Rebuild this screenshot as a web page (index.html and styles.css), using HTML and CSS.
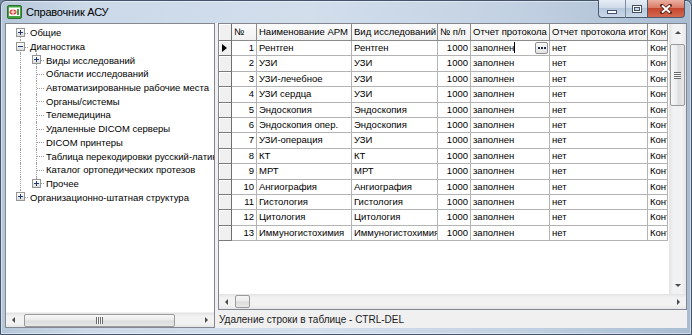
FILE: index.html
```html
<!DOCTYPE html>
<html lang="ru">
<head>
<meta charset="utf-8">
<title>Справочник АСУ</title>
<link rel="stylesheet" href="styles.css">
</head>
<body>
<div class="window">
  <div class="titlebar">
    <svg class="app-icon" width="15" height="14" viewBox="0 0 15 14">
      <rect x="0.5" y="0.5" width="14" height="13" rx="1.5" fill="#46a446" stroke="#2c6e2c"/>
      <rect x="2" y="2.5" width="11" height="8.5" fill="#fff"/>
      <ellipse cx="6" cy="7" rx="3.6" ry="2.6" fill="#d9443a"/>
      <rect x="5.5" y="4.6" width="1" height="4.8" fill="#fff"/>
      <rect x="3.6" y="6.5" width="4.8" height="1" fill="#fff"/>
      <rect x="10" y="4" width="2" height="6" fill="#46a446"/>
    </svg>
    <span class="title">Справочник АСУ</span>
    <div class="caption-btns">
      <div class="cbtn cbtn-min"><span class="min-glyph"></span></div>
      <div class="cbtn cbtn-max"><span class="max-glyph"></span></div>
      <div class="cbtn cbtn-close">
        <svg width="12" height="10" viewBox="0 0 12 10">
          <path d="M2 1.5 L10 8.5 M10 1.5 L2 8.5" stroke="#5b2318" stroke-width="3.6" stroke-linecap="square"/>
          <path d="M2 1.5 L10 8.5 M10 1.5 L2 8.5" stroke="#fff" stroke-width="2"/>
        </svg>
      </div>
    </div>
  </div>

  <div class="client">
    <div class="tree-panel">
      <div class="tree">
        <div class="trow"><span class="g f"><span class="box plus"></span></span><span class="tlabel">Общие</span></div>
        <div class="trow"><span class="g t"><span class="box"></span></span><span class="tlabel">Диагностика</span></div>
        <div class="trow"><span class="g v"></span><span class="g t"><span class="box plus"></span></span><span class="tlabel">Виды исследований</span></div>
        <div class="trow"><span class="g v"></span><span class="g t"></span><span class="tlabel">Области исследований</span></div>
        <div class="trow"><span class="g v"></span><span class="g t"></span><span class="tlabel">Автоматизированные рабочие места</span></div>
        <div class="trow"><span class="g v"></span><span class="g t"></span><span class="tlabel">Органы/системы</span></div>
        <div class="trow"><span class="g v"></span><span class="g t"></span><span class="tlabel">Телемедицина</span></div>
        <div class="trow"><span class="g v"></span><span class="g t"></span><span class="tlabel">Удаленные DICOM серверы</span></div>
        <div class="trow"><span class="g v"></span><span class="g t"></span><span class="tlabel">DICOM принтеры</span></div>
        <div class="trow"><span class="g v"></span><span class="g t"></span><span class="tlabel">Таблица перекодировки русский-латиница</span></div>
        <div class="trow"><span class="g v"></span><span class="g t"></span><span class="tlabel">Каталог ортопедических протезов</span></div>
        <div class="trow"><span class="g v"></span><span class="g l"><span class="box plus"></span></span><span class="tlabel">Прочее</span></div>
        <div class="trow"><span class="g l"><span class="box plus"></span></span><span class="tlabel">Организационно-штатная структура</span></div>
      </div>
      <div class="hscroll tree-hscroll">
        <div class="sb-btn"><span class="arr-left"></span></div>
        <div class="sb-track">
          <div class="hthumb tree-thumb"><span class="grip-v"></span></div>
        </div>
        <div class="sb-btn"><span class="arr-right"></span></div>
      </div>
    </div>

    <div class="splitter"></div>

    <div class="right-panel">
      <div class="grid-box">
        <div class="grid-main">
          <div class="grid-table">
            <div class="c ind hd"></div>
            <div class="c hd">№</div>
            <div class="c hd">Наименование АРМ</div>
            <div class="c hd">Вид исследований</div>
            <div class="c hd">№ п/п</div>
            <div class="c hd">Отчет протокола</div>
            <div class="c hd">Отчет протокола итог</div>
            <div class="c hd">Контроль</div>

            <div class="c ind"><span class="cur-arrow"></span></div>
            <div class="c r">1</div><div class="c">Рентген</div><div class="c">Рентген</div><div class="c r">1000</div>
            <div class="c edit">заполнен<span class="caret"></span><span class="ell-btn"><i class="dot"></i><i class="dot"></i><i class="dot"></i></span></div><div class="c">нет</div><div class="c">Контроль</div>

            <div class="c ind"></div>
            <div class="c r">2</div><div class="c">УЗИ</div><div class="c">УЗИ</div><div class="c r">1000</div>
            <div class="c">заполнен</div><div class="c">нет</div><div class="c">Контроль</div>

            <div class="c ind"></div>
            <div class="c r">3</div><div class="c">УЗИ-лечебное</div><div class="c">УЗИ</div><div class="c r">1000</div>
            <div class="c">заполнен</div><div class="c">нет</div><div class="c">Контроль</div>

            <div class="c ind"></div>
            <div class="c r">4</div><div class="c">УЗИ сердца</div><div class="c">УЗИ</div><div class="c r">1000</div>
            <div class="c">заполнен</div><div class="c">нет</div><div class="c">Контроль</div>

            <div class="c ind"></div>
            <div class="c r">5</div><div class="c">Эндоскопия</div><div class="c">Эндоскопия</div><div class="c r">1000</div>
            <div class="c">заполнен</div><div class="c">нет</div><div class="c">Контроль</div>

            <div class="c ind"></div>
            <div class="c r">6</div><div class="c">Эндоскопия опер.</div><div class="c">Эндоскопия</div><div class="c r">1000</div>
            <div class="c">заполнен</div><div class="c">нет</div><div class="c">Контроль</div>

            <div class="c ind"></div>
            <div class="c r">7</div><div class="c">УЗИ-операция</div><div class="c">УЗИ</div><div class="c r">1000</div>
            <div class="c">заполнен</div><div class="c">нет</div><div class="c">Контроль</div>

            <div class="c ind"></div>
            <div class="c r">8</div><div class="c">КТ</div><div class="c">КТ</div><div class="c r">1000</div>
            <div class="c">заполнен</div><div class="c">нет</div><div class="c">Контроль</div>

            <div class="c ind"></div>
            <div class="c r">9</div><div class="c">МРТ</div><div class="c">МРТ</div><div class="c r">1000</div>
            <div class="c">заполнен</div><div class="c">нет</div><div class="c">Контроль</div>

            <div class="c ind"></div>
            <div class="c r">10</div><div class="c">Ангиография</div><div class="c">Ангиография</div><div class="c r">1000</div>
            <div class="c">заполнен</div><div class="c">нет</div><div class="c">Контроль</div>

            <div class="c ind"></div>
            <div class="c r">11</div><div class="c">Гистология</div><div class="c">Гистология</div><div class="c r">1000</div>
            <div class="c">заполнен</div><div class="c">нет</div><div class="c">Контроль</div>

            <div class="c ind"></div>
            <div class="c r">12</div><div class="c">Цитология</div><div class="c">Цитология</div><div class="c r">1000</div>
            <div class="c">заполнен</div><div class="c">нет</div><div class="c">Контроль</div>

            <div class="c ind"></div>
            <div class="c r">13</div><div class="c">Иммуногистохимия</div><div class="c">Иммуногистохимия</div><div class="c r">1000</div>
            <div class="c">заполнен</div><div class="c">нет</div><div class="c">Контроль</div>
          </div>
          <div class="vscroll">
            <div class="sb-btn-v"><span class="arr-up"></span></div>
            <div class="sb-track-v">
              <div class="vthumb"><span class="grip-h"></span></div>
            </div>
            <div class="sb-btn-v"><span class="arr-down"></span></div>
          </div>
        </div>
        <div class="grid-bottom">
          <div class="hscroll grid-hscroll">
            <div class="sb-btn"><span class="arr-left"></span></div>
            <div class="sb-track">
              <div class="hthumb grid-thumb"></div>
            </div>
            <div class="sb-btn"><span class="arr-right"></span></div>
          </div>
          <div class="corner"></div>
        </div>
      </div>
      <div class="status">Удаление строки в таблице - CTRL-DEL</div>
    </div>
  </div>
</div>
</body>
</html>
```

FILE: styles.css
```css
* { box-sizing: border-box; }

html, body {
  margin: 0;
  padding: 0;
}

body {
  width: 692px;
  height: 335px;
  overflow: hidden;
  background: #7c8ca2;
  font-family: "Liberation Sans", Arial, sans-serif;
  font-size: 9.5px;
  color: #000;
}

/* ---------- window frame ---------- */
.window {
  width: 692px;
  height: 335px;
  display: flex;
  flex-direction: column;
  border: 1px solid #44546a;
  border-radius: 6px 6px 0 0;
  background: linear-gradient(90deg, #b6c7da 0%, #cbd9e8 12%, #d2deec 45%, #c2d1e2 75%, #a9bcd2 100%);
  box-shadow: inset 0 0 0 1px rgba(255, 255, 255, 0.45);
}

.titlebar {
  height: 22px;
  flex: none;
  display: flex;
  align-items: flex-start;
  padding-left: 6px;
}

.app-icon {
  margin-top: 4px;
  flex: none;
}

.title {
  margin-left: 4px;
  margin-top: 4px;
  font-size: 11px;
  line-height: 14px;
  letter-spacing: -0.2px;
  color: #000;
}

.caption-btns {
  margin-left: auto;
  margin-right: 6px;
  margin-top: -1px;
  height: 18px;
  display: flex;
}

.cbtn {
  height: 18px;
  display: flex;
  align-items: center;
  justify-content: center;
  border: 1px solid #4d5b70;
  border-top: none;
}

.cbtn-min {
  width: 27px;
  border-radius: 0 0 0 4px;
  border-right: none;
  background: linear-gradient(#e6edf5 0%, #d0dcea 45%, #b7c8dc 50%, #cad8e8 100%);
}

.cbtn-max {
  width: 23px;
  background: linear-gradient(#e6edf5 0%, #d0dcea 45%, #b7c8dc 50%, #cad8e8 100%);
  border-left: 1px solid #7d8ba0;
}

.cbtn-close {
  width: 37px;
  border-left: none;
  border-radius: 0 0 4px 0;
  background: linear-gradient(#eab0a2 0%, #da7d68 45%, #c5472f 50%, #d36a50 100%);
}

.min-glyph {
  width: 10px;
  height: 4px;
  margin-top: 6px;
  background: #fff;
  border: 1px solid #45536a;
}

.max-glyph {
  width: 10px;
  height: 8px;
  border: 1px solid #45536a;
  box-shadow: inset 0 0 0 1px #fff, inset 0 0 0 2px #45536a;
  background: #c9d6e6;
}

/* ---------- client ---------- */
.client {
  flex: 1;
  display: flex;
  margin: 0 4px 6px 4px;
  background: #f0f0f0;
  min-height: 0;
}

.tree-panel {
  width: 210px;
  flex: none;
  display: flex;
  flex-direction: column;
  border: 1px solid #828790;
  background: #fff;
}

.tree {
  flex: 1;
  overflow: hidden;
  padding: 2px 0 0 6px;
}

.trow {
  height: 13.7px;
  display: flex;
  align-items: center;
  white-space: nowrap;
}

.tlabel {
  margin-left: 2px;
  line-height: 13px;
}

.g {
  position: relative;
  width: 16px;
  height: 100%;
  flex: none;
}

.g::before,
.g::after {
  content: "";
  position: absolute;
}

.g.v::before,
.g.t::before {
  left: 8px;
  top: 0;
  bottom: 0;
  border-left: 1px dotted #a0a0a0;
}

.g.l::before {
  left: 8px;
  top: 0;
  height: 50%;
  border-left: 1px dotted #a0a0a0;
}

.g.f::before {
  left: 8px;
  top: 50%;
  bottom: 0;
  border-left: 1px dotted #a0a0a0;
}

.g.t::after,
.g.l::after,
.g.f::after {
  left: 9px;
  width: 7px;
  top: 50%;
  border-top: 1px dotted #a0a0a0;
}

.box {
  position: absolute;
  left: 4px;
  top: 2px;
  width: 9px;
  height: 9px;
  border: 1px solid #949494;
  background: linear-gradient(#ffffff, #dcdcdc);
  z-index: 1;
}

.box::before {
  content: "";
  position: absolute;
  left: 1px;
  top: 3px;
  width: 5px;
  height: 1px;
  background: #1e3a6e;
}

.box.plus::after {
  content: "";
  position: absolute;
  left: 3px;
  top: 1px;
  width: 1px;
  height: 5px;
  background: #1e3a6e;
}

.splitter {
  width: 3px;
  flex: none;
}

/* ---------- scrollbars ---------- */
.hscroll {
  height: 15px;
  display: flex;
  background: linear-gradient(#e3e3e3, #f2f2f2 25%, #f2f2f2 75%, #e6e6e6);
  flex: none;
}

.tree-hscroll {
  border-top: 1px solid #f0f0f0;
}

.sb-btn {
  width: 15px;
  flex: none;
  display: flex;
  align-items: center;
  justify-content: center;
}

.sb-track {
  flex: 1;
  display: flex;
  align-items: center;
}

.hthumb {
  height: 13px;
  border: 1px solid #9a9a9a;
  border-radius: 2px;
  background: linear-gradient(#f7f7f7, #ebebeb 45%, #dcdcdc 55%, #e8e8e8);
  display: flex;
  align-items: center;
  justify-content: center;
}

.tree-thumb {
  width: 151px;
  margin-left: 3px;
}

.grid-thumb {
  width: 15px;
  margin-left: 1px;
}

.grip-v {
  width: 7px;
  height: 7px;
  background: repeating-linear-gradient(90deg, #6b6b6b 0 1px, #f6f6f6 1px 2px);
}

.arr-left {
  border-top: 3px solid transparent;
  border-bottom: 3px solid transparent;
  border-right: 3px solid #4a4a4a;
}

.arr-right {
  border-top: 3px solid transparent;
  border-bottom: 3px solid transparent;
  border-left: 3px solid #4a4a4a;
}

.arr-up {
  border-left: 3px solid transparent;
  border-right: 3px solid transparent;
  border-bottom: 3px solid #4a4a4a;
}

.arr-down {
  border-left: 3px solid transparent;
  border-right: 3px solid transparent;
  border-top: 3px solid #4a4a4a;
}

.vscroll {
  width: 17px;
  flex: none;
  display: flex;
  flex-direction: column;
  background: linear-gradient(90deg, #e3e3e3, #f2f2f2 25%, #f2f2f2 75%, #e6e6e6);
}

.sb-btn-v {
  height: 17px;
  flex: none;
  display: flex;
  align-items: center;
  justify-content: center;
}

.sb-track-v {
  flex: 1;
  display: flex;
  flex-direction: column;
  align-items: center;
}

.vthumb {
  width: 15px;
  height: 62px;
  margin-top: 3px;
  border: 1px solid #9a9a9a;
  border-radius: 2px;
  background: linear-gradient(90deg, #f7f7f7, #ebebeb 45%, #dcdcdc 55%, #e8e8e8);
  display: flex;
  align-items: center;
  justify-content: center;
}

.grip-h {
  width: 7px;
  height: 7px;
  background: repeating-linear-gradient(#6b6b6b 0 1px, #f6f6f6 1px 2px);
}

.corner {
  width: 17px;
  flex: none;
  background: #f0f0f0;
}

/* ---------- grid ---------- */
.right-panel {
  flex: 1;
  display: flex;
  flex-direction: column;
  min-width: 0;
}

.grid-box {
  flex: 1;
  display: flex;
  flex-direction: column;
  border: 1px solid #828790;
  background: #fff;
  min-height: 0;
}

.grid-main {
  flex: 1;
  display: flex;
  min-height: 0;
}

.grid-table {
  flex: 1;
  overflow: hidden;
  display: grid;
  grid-template-columns: 13px 25px 95px 86px 33px 79px 98px 20px;
  grid-template-rows: 17px;
  grid-auto-rows: 15.4px;
  align-content: start;
  background: #fff;
}

.c {
  border-right: 1px solid #b4b4b4;
  border-bottom: 1px solid #b4b4b4;
  padding: 0 2px;
  white-space: nowrap;
  overflow: hidden;
  line-height: 14px;
}

.c.r {
  text-align: right;
}

.hd {
  background: linear-gradient(#fbfbfb, #f1f1f1);
  border-right-color: #8a8a8a;
  border-bottom-color: #8a8a8a;
  line-height: 16px;
}

.ind {
  padding: 0;
  background: #f0f0f0;
  border-right: 1px solid #6e6e6e;
  border-bottom: 1px solid #7a7a7a;
  box-shadow: inset 1px 1px 0 #ffffff;
  display: flex;
  align-items: center;
  justify-content: center;
}

.cur-arrow {
  width: 0;
  height: 0;
  border-top: 4px solid transparent;
  border-bottom: 4px solid transparent;
  border-left: 5px solid #000;
  margin-left: -2px;
}

.edit {
  position: relative;
}

.caret {
  display: inline-block;
  width: 1px;
  height: 11px;
  background: #000;
  vertical-align: -2px;
}

.ell-btn {
  position: absolute;
  right: 1px;
  top: 1px;
  width: 13px;
  height: 12px;
  border: 1px solid #8f8f8f;
  border-radius: 2px;
  background: linear-gradient(#fafafa, #e2e2e2);
  display: flex;
  align-items: center;
  justify-content: center;
  gap: 1px;
}

.dot {
  width: 2px;
  height: 2px;
  background: #1b2a4a;
}

/* ---------- status ---------- */
.status {
  height: 18px;
  flex: none;
  padding: 3px 0 0 1px;
  font-size: 10px;
  line-height: 13px;
  color: #1a1a1a;
}
```
